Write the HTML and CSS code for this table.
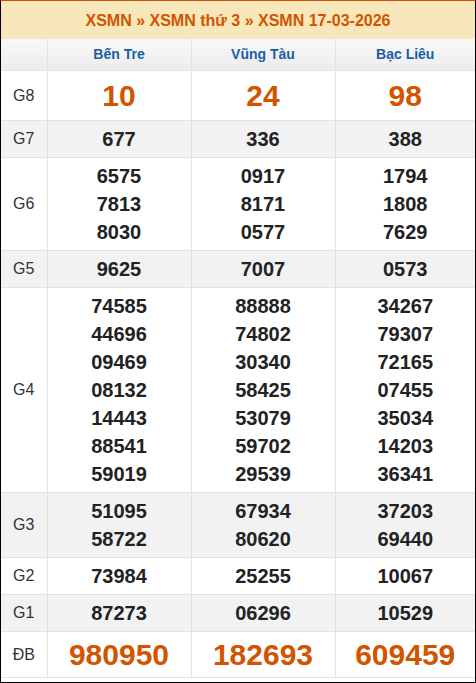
FILE: index.html
```html
<!DOCTYPE html>
<html lang="vi">
<head>
<meta charset="utf-8">
<title>XSMN 17-03-2026</title>
<link rel="stylesheet" href="styles.css">
</head>
<body>
<div class="frame">
  <div class="title">XSMN » XSMN thứ 3 » XSMN 17-03-2026</div>
  <table class="kq">
    <colgroup><col class="c-label"><col class="c-prov"><col class="c-prov"><col class="c-last"></colgroup>
    <thead>
      <tr class="head"><th></th><th>Bến Tre</th><th>Vũng Tàu</th><th>Bạc Liêu</th></tr>
    </thead>
    <tbody>
      <tr class="big"><td class="lb">G8</td><td>10</td><td>24</td><td>98</td></tr>
      <tr class="alt"><td class="lb">G7</td><td>677</td><td>336</td><td>388</td></tr>
      <tr><td class="lb">G6</td><td>6575<br>7813<br>8030</td><td>0917<br>8171<br>0577</td><td>1794<br>1808<br>7629</td></tr>
      <tr class="alt"><td class="lb">G5</td><td>9625</td><td>7007</td><td>0573</td></tr>
      <tr><td class="lb">G4</td><td>74585<br>44696<br>09469<br>08132<br>14443<br>88541<br>59019</td><td>88888<br>74802<br>30340<br>58425<br>53079<br>59702<br>29539</td><td>34267<br>79307<br>72165<br>07455<br>35034<br>14203<br>36341</td></tr>
      <tr class="alt"><td class="lb">G3</td><td>51095<br>58722</td><td>67934<br>80620</td><td>37203<br>69440</td></tr>
      <tr><td class="lb">G2</td><td>73984</td><td>25255</td><td>10067</td></tr>
      <tr class="alt"><td class="lb">G1</td><td>87273</td><td>06296</td><td>10529</td></tr>
      <tr class="big db"><td class="lb">ĐB</td><td>980950</td><td>182693</td><td>609459</td></tr>
    </tbody>
  </table>
</div>
</body>
</html>
```
FILE: styles.css
```css
html, body { margin: 0; padding: 0; background: #fff; }
body { font-family: "Liberation Sans", Arial, sans-serif; }
.frame {
  width: 474px;
  height: 681px;
  border: 1px solid #000;
  border-top: 1px solid #c4520c;
  overflow: hidden;
}
.title {
  height: 38px;
  line-height: 39px;
  background: #f8e7bb;
  color: #d35400;
  font-weight: bold;
  font-size: 16px;
  text-align: center;
}
.kq {
  width: 474px;
  border-collapse: collapse;
  table-layout: fixed;
}
.c-label { width: 46px; }
.c-prov { width: 144px; }
.c-last { width: 140px; }
.kq th, .kq td {
  border: 1px solid #e2e2e2;
  text-align: center;
  padding: 4px 0;
}
.kq tr > :first-child { border-left: none; }
.kq tr > :last-child { border-right: none; }
.head th {
  background: linear-gradient(#f8f8f8, #ececec);
  color: #1a5ea8;
  font-size: 14px;
  font-weight: bold;
  line-height: 31px;
  padding: 0;
  border-top: none;
}
.kq td {
  font-size: 20px;
  font-weight: bold;
  color: #222;
  line-height: 28px;
}
.kq td.lb {
  font-size: 16px;
  font-weight: normal;
  color: #333;
}
.alt td { background: #f2f2f2; }
.big td:not(.lb) {
  font-size: 30px;
  color: #d35400;
  line-height: 41px;
}
.db td:not(.lb) { line-height: 37px; }
```
